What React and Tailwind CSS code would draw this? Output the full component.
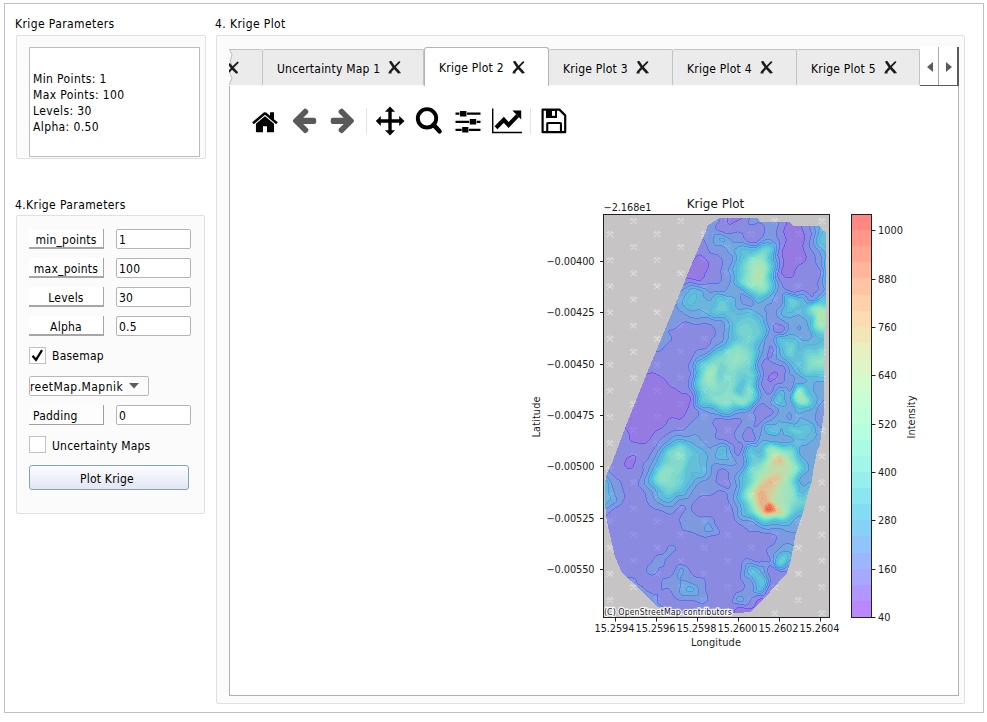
import React from "react";

// ---------------------------------------------------------------------------
// Kriged intensity surface, sampled every 10 px. Values are tenths of a band;
// each row is [first column, values...].
// ---------------------------------------------------------------------------
const SAMPLES = [
  [8, 28, 28, 28, 28, 28, 24, 17, 15, 26, 31, 34, 28, 18, 20, 30, 50, 60],
  [8, 28, 28, 28, 28, 31, 29, 18, 21, 31, 32, 34, 28, 16, 18, 30, 50, 60],
  [8, 28, 28, 28, 28, 33, 29, 28, 28, 27, 28, 36, 27, 15, 18, 32, 58, 62],
  [8, 28, 28, 28, 28, 38, 52, 42, 36, 28, 32, 42, 27, 15, 17, 32, 60, 64],
  [8, 25, 25, 25, 24, 31, 34, 44, 60, 62, 85, 72, 28, 13, 16, 30, 46, 62],
  [8, 24, 24, 22, 17, 24, 30, 38, 65, 92, 125, 70, 26, 14, 18, 25, 38, 60],
  [8, 25, 22, 16, 14, 24, 29, 42, 75, 118, 138, 72, 26, 15, 24, 22, 35, 85],
  [8, 26, 24, 22, 23, 27, 31, 44, 82, 118, 142, 76, 28, 25, 27, 22, 34, 66],
  [8, 32, 42, 52, 52, 38, 38, 44, 46, 75, 110, 62, 35, 31, 30, 28, 36, 56],
  [8, 34, 45, 64, 58, 52, 70, 58, 40, 34, 58, 44, 36, 78, 60, 36, 70, 62],
  [8, 33, 42, 50, 52, 60, 76, 68, 52, 54, 44, 36, 48, 68, 56, 85, 138, 85],
  [8, 32, 34, 33, 38, 36, 42, 62, 74, 75, 65, 36, 37, 48, 44, 66, 142, 105],
  [8, 30, 28, 22, 22, 28, 34, 52, 84, 82, 68, 34, 27, 46, 40, 50, 100, 85],
  [7, 31, 30, 28, 25, 22, 28, 40, 60, 80, 80, 62, 31, 62, 70, 50, 55, 60, 62],
  [6, 30, 30, 28, 26, 27, 34, 42, 66, 95, 105, 85, 46, 29, 58, 84, 60, 75, 80, 85],
  [6, 24, 23, 24, 26, 30, 50, 82, 92, 110, 108, 85, 38, 30, 40, 62, 70, 100, 112, 105],
  [6, 21, 22, 23, 25, 34, 80, 130, 82, 100, 90, 82, 36, 22, 24, 46, 60, 90, 82, 85],
  [5, 18, 18, 19, 22, 25, 35, 82, 122, 90, 100, 70, 80, 37, 19, 27, 36, 46, 54, 52, 50],
  [4, 17, 17, 17, 17, 18, 21, 31, 78, 100, 92, 100, 68, 95, 40, 28, 54, 42, 104, 60, 45, 42],
  [4, 16, 16, 16, 16, 17, 18, 22, 62, 88, 105, 102, 108, 85, 36, 38, 68, 48, 130, 72, 42, 45],
  [4, 16, 16, 16, 16, 16, 18, 22, 36, 48, 62, 64, 52, 38, 27, 29, 45, 41, 58, 50, 38, 42],
  [3, 22, 18, 16, 17, 18, 21, 22, 28, 34, 34, 28, 26, 31, 33, 28, 42, 50, 42, 52, 45, 36, 40],
  [3, 22, 19, 17, 18, 22, 28, 30, 36, 36, 33, 27, 26, 34, 29, 38, 65, 50, 75, 72, 65, 45, 45],
  [3, 23, 20, 19, 21, 30, 48, 52, 50, 40, 36, 32, 28, 31, 28, 50, 45, 50, 46, 58, 52, 46, 48],
  [2, 25, 23, 22, 23, 30, 46, 88, 98, 75, 54, 42, 62, 38, 29, 65, 60, 115, 112, 85, 46, 44, 48],
  [2, 26, 23, 18, 24, 34, 60, 92, 98, 65, 60, 48, 46, 50, 36, 72, 85, 145, 182, 130, 66, 46, 52],
  [1, 40, 31, 24, 21, 28, 50, 98, 102, 92, 64, 62, 42, 27, 34, 42, 82, 110, 150, 150, 128, 72, 48, 50],
  [1, 62, 38, 29, 24, 32, 56, 98, 100, 75, 58, 42, 37, 28, 31, 55, 95, 150, 190, 168, 112, 52, 46, 50],
  [1, 72, 48, 34, 27, 28, 44, 65, 86, 70, 46, 36, 33, 31, 34, 60, 120, 185, 172, 132, 112, 58, 70],
  [1, 60, 50, 32, 25, 24, 33, 48, 52, 40, 32, 28, 24, 23, 33, 60, 125, 198, 165, 138, 118, 86, 80],
  [1, 40, 33, 26, 23, 22, 28, 32, 33, 28, 32, 25, 22, 23, 29, 50, 88, 148, 235, 155, 95, 60, 60],
  [1, 28, 25, 24, 26, 24, 24, 25, 27, 31, 38, 33, 35, 24, 24, 36, 46, 70, 80, 75, 58, 46],
  [1, 24, 24, 25, 25, 25, 25, 25, 27, 29, 32, 35, 43, 28, 25, 25, 31, 34, 35, 40, 41, 42],
  [2, 25, 25, 25, 25, 25, 25, 25, 25, 25, 25, 25, 25, 25, 25, 26, 28, 28, 34, 38, 35],
  [2, 25, 25, 25, 25, 26, 28, 33, 26, 25, 25, 25, 25, 25, 25, 25, 25, 33, 45, 48],
  [2, 25, 25, 25, 25, 28, 35, 26, 22, 24, 25, 25, 25, 25, 27, 33, 29, 34, 80, 52],
  [2, 26, 25, 25, 25, 33, 29, 26, 42, 31, 26, 25, 25, 25, 32, 62, 55, 28, 31],
  [3, 35, 33, 26, 25, 29, 33, 40, 36, 32, 25, 24, 25, 28, 40, 70, 28, 22],
  [4, 34, 33, 29, 30, 31, 42, 54, 40, 27, 24, 25, 31, 38, 55, 22],
  [5, 33, 36, 29, 26, 29, 32, 32, 28, 24, 26, 44, 30, 20, 15],
  [6, 40, 36, 24, 24, 24, 24, 24, 24, 22, 17, 17, 17],
];

const HULL = [
  [720, 218], [758, 218], [760, 222], [790, 222], [793, 226], [820, 226], [822, 230],
  [826, 232], [826, 325], [824, 332], [824, 413], [822, 427], [820, 445], [817, 451],
  [813, 472], [812, 481], [808, 493], [803, 513], [795, 537], [791, 560], [787, 573],
  [770, 592], [751, 612], [737, 613], [672, 613], [658, 607], [640, 589], [622, 573],
  [615, 557], [607, 522], [605, 505], [605, 482], [607, 473], [612, 463], [627, 423],
  [647, 373], [662, 337], [673, 310], [688, 273], [705, 233], [708, 225],
];

function sample(col, row) {
  const r = SAMPLES[Math.max(0, Math.min(SAMPLES.length - 1, row))];
  const i = Math.max(1, Math.min(r.length - 1, col - r[0] + 1));
  return r[i] / 10;
}

function cubic(a, b, c, d, t) {
  return b + 0.5 * t * (c - a + t * (2 * a - 5 * b + 4 * c - d + t * (3 * (b - c) + d - a)));
}

function intensity(x, y) {
  const wx = x + 1.3 * Math.sin(y * 0.3 + x * 0.09);
  const wy = y + 1.3 * Math.sin(x * 0.28 - y * 0.1);
  const gx = (wx - 590) / 10;
  const gy = (wy - 210) / 10;
  const ix = Math.floor(gx);
  const iy = Math.floor(gy);
  const tx = gx - ix;
  const line = (j) =>
    cubic(sample(ix - 1, j), sample(ix, j), sample(ix + 1, j), sample(ix + 2, j), tx);
  return cubic(line(iy - 1), line(iy), line(iy + 1), line(iy + 2), gy - iy);
}

function inHull(x, y) {
  let inside = false;
  for (let i = 0, j = HULL.length - 1; i < HULL.length; j = i++) {
    const [xi, yi] = HULL[i];
    const [xj, yj] = HULL[j];
    if (yi > y !== yj > y && x < ((xj - xi) * (y - yi)) / (yj - yi) + xi) inside = !inside;
  }
  return inside;
}

const BANDS = 25;

function rainbow(band) {
  const x = (band + 0.5) / BANDS;
  const r = Math.abs(2 * x - 0.5);
  const g = Math.sin(Math.PI * x);
  const b = Math.cos((Math.PI * x) / 2);
  return `rgb(${[r, g, b].map((v) => Math.round(Math.min(1, v) * 255)).join(",")})`;
}

function buildSurface() {
  const x0 = 604, x1 = 828, y0 = 216, y1 = 616;
  const band = [];
  for (let y = y0; y <= y1; y++) {
    const row = [];
    for (let x = x0; x <= x1; x++) {
      row.push(
        inHull(x + 0.5, y + 0.5)
          ? Math.max(1, Math.min(BANDS - 1, Math.floor(intensity(x, y))))
          : -1
      );
    }
    band.push(row);
  }
  const fills = Array(BANDS).fill("");
  const lines = Array(BANDS).fill("");
  for (let j = 0; j < band.length; j++) {
    let start = 0;
    let key = null;
    for (let i = 0; i <= band[j].length; i++) {
      let next = null;
      const b = band[j][i];
      if (b >= 0) {
        const around = [band[j][i + 1], band[j][i - 1], band[j + 1]?.[i], band[j - 1]?.[i]];
        const edge = around.some((n) => n >= 0 && n < b);
        next = edge ? b + 100 : b;
      }
      if (next !== key) {
        if (key !== null) {
          const w = i - start;
          const d = `M${x0 + start} ${y0 + j}h${w}v1h-${w}z`;
          if (key >= 100) lines[key - 100] += d;
          else fills[key] += d;
        }
        start = i;
        key = next;
      }
    }
  }
  return { fills, lines };
}

const SURFACE = buildSurface();

const QUARRIES = [];
for (let c = 0; c < 10; c++) {
  for (let r = 0; r < 17; r++) {
    const y = (c % 2 ? 221 : 234) + r * 26.15 - (c % 2 ? 0 : 26.15);
    if (y > 219 && y < 614) QUARRIES.push([610 + c * 23.55, y]);
  }
}

const Y_TICKS = [
  [261.5, "−0.00400"], [312.8, "−0.00425"], [364.3, "−0.00450"], [415.5, "−0.00475"],
  [466.5, "−0.00500"], [518.3, "−0.00525"], [569.5, "−0.00550"],
];
const X_TICKS = [
  [615.5, "15.2594"], [656.5, "15.2596"], [697.5, "15.2598"],
  [738.5, "15.2600"], [779.5, "15.2602"], [820.5, "15.2604"],
];
const BAR_TICKS = [
  [230.5, "1000"], [279.3, "880"], [327.3, "760"], [375.5, "640"], [424.3, "520"],
  [472.3, "400"], [520.5, "280"], [569.3, "160"], [617.3, "40"],
];

function KrigePlot() {
  return (
    <svg
      viewBox="520 190 420 465"
      className="block h-[465px] w-[420px] font-['DejaVu_Sans',sans-serif] text-[9.8px] tracking-normal"
      fill="#1a1a1a"
    >
      <rect x="603" y="214" width="227" height="403" fill="#c6c4c4" />
      <g stroke="#dcdcdc" strokeWidth="1.2" fill="none">
        {QUARRIES.map(([x, y], i) => (
          <path
            key={i}
            d={`M${x - 3} ${y + 3}l5.2 -5.2M${x + 3} ${y + 3}l-5.2 -5.2M${x - 3.6} ${y - 0.6}l2.6 -2.4M${x + 3.6} ${y - 0.6}l-2.6 -2.4`}
          />
        ))}
      </g>
      <g shapeRendering="crispEdges">
        {SURFACE.fills.map((d, i) => (
          <path key={i} d={d} fill={rainbow(i)} fillOpacity="0.5" />
        ))}
        {SURFACE.lines.map((d, i) => (
          <path
            key={i}
            d={d}
            fill={rainbow(i > 5 ? i : i - 0.5)}
            fillOpacity={i > 18 ? 0.75 : i > 8 ? 0.62 : i > 5 ? 0.72 : 0.82}
          />
        ))}
      </g>
      <text
        x="604" y="615.3" textLength="128" className="text-[8px]"
        stroke="#fff" strokeOpacity="0.85" strokeWidth="2.4" paintOrder="stroke"
      >
        (C) OpenStreetMap contributors
      </text>
      <rect x="603.5" y="214.5" width="226" height="403" fill="none" stroke="#222" />

      <g shapeRendering="crispEdges">
        {Array.from({ length: BANDS }, (_, i) => {
          const top = Math.round(617 - (i + 1) * 16.12);
          const bottom = Math.round(617 - i * 16.12);
          return (
            <rect
              key={i} x="851" y={top} width="21" height={bottom - top}
              fill={rainbow(i)} fillOpacity="0.5"
            />
          );
        })}
      </g>
      <rect x="851.5" y="214.5" width="20" height="403" fill="none" stroke="#222" />

      <g stroke="#222">
        {Y_TICKS.map(([y]) => <path key={y} d={`M600 ${Math.floor(y)}.5h3`} />)}
        {X_TICKS.map(([x]) => <path key={x} d={`M${x} 618v3.5`} />)}
        {BAR_TICKS.map(([y]) => <path key={y} d={`M872 ${Math.floor(y)}.5h3.5`} />)}
      </g>
      {Y_TICKS.map(([y, t]) => (
        <text key={t} x="594.5" y={y + 3.5} textAnchor="end" textLength="48">{t}</text>
      ))}
      {X_TICKS.map(([x, t]) => (
        <text key={t} x={x - 1} y="632" textAnchor="middle" textLength="40">{t}</text>
      ))}
      {BAR_TICKS.map(([y, t]) => (
        <text key={t} x="878" y={y + 3.5}>{t}</text>
      ))}
      <text x="603.5" y="211" textLength="48">−2.168e1</text>
      <text x="715.5" y="208" textAnchor="middle" textLength="57.5" className="text-[12px]">Krige Plot</text>
      <text x="716" y="646" textAnchor="middle" textLength="50">Longitude</text>
      <text transform="translate(540 417) rotate(-90)" textAnchor="middle" textLength="41">Latitude</text>
      <text transform="translate(914.5 417) rotate(-90)" textAnchor="middle" textLength="43">Intensity</text>
    </svg>
  );
}

function CloseMark() {
  return (
    <svg viewBox="0 0 13 13" className="h-[13px] w-[13px] shrink-0" fill="none" stroke="#1c1c1c" strokeLinecap="round">
      <path d="M2.6 1.2Q5 5.6 10.6 11" strokeWidth="2.6" />
      <path d="M11.3 1.2L6.2 6.3" strokeWidth="1.9" />
      <path d="M6.2 6.3L2 11" strokeWidth="2.4" />
      <path d="M.9 11.9h2.4M10 11.7h2.3" strokeWidth="1" />
    </svg>
  );
}

function Tab({ label, selected, className }) {
  return (
    <div
      className={
        selected
          ? "flex h-[39px] shrink-0 items-center gap-[8px] self-end rounded-t-[3px] border border-b-0 border-[#b4b4b4] bg-white pl-[14px] " + className
          : "flex h-[36px] shrink-0 items-center gap-[8px] rounded-t-[2px] border-t border-r border-[#c2c2c2] bg-[#ebebeb] pl-[14px] " + className
      }
    >
      <span className={selected ? "whitespace-nowrap pt-px" : "whitespace-nowrap pt-[2px]"}>{label}</span>
      <CloseMark />
    </div>
  );
}

function ToolIcon({ children, className }) {
  return (
    <svg viewBox="0 0 30 30" className={"h-[30px] w-[30px] shrink-0 " + className} fill="#000">
      {children}
    </svg>
  );
}

const HOME =
  "M1408 992v480q0 26-19 45t-45 19h-384v-384h-256v384h-384q-26 0-45-19t-19-45v-480q0-1 .5-3t.5-3l575-474 575 474q1 2 1 6zm223-69l-62 74q-8 9-21 11h-3q-13 0-21-7l-692-577-692 577q-12 8-24 7-13-2-21-11l-62-74q-8-10-7-23.5t11-21.5l719-599q32-26 76-26t76 26l244 204v-195q0-14 9-23t23-9h192q14 0 23 9t9 23v408l219 182q10 8 11 21.5t-7 23.5z";
const ARROW =
  "M1536 896v128q0 53-32.5 90.5t-84.5 37.5h-704l293 294q38 36 38 90t-38 90l-75 76q-37 37-90 37-52 0-91-37l-651-652q-37-37-37-90 0-52 37-91l651-650q38-38 91-38 52 0 90 38l75 74q38 38 38 91t-38 91l-293 293h704q52 0 84.5 37.5t32.5 90.5z";

function Toolbar() {
  return (
    <div className="flex h-[30px] items-center pl-[20px]">
      <ToolIcon className="">
        <path d={HOME} transform="translate(1.9 2.2) scale(0.0157)" />
      </ToolIcon>
      <ToolIcon className="ml-[9px]">
        <path d={ARROW} fill="#595959" transform="translate(2.9 -0.3) scale(0.0158)" />
      </ToolIcon>
      <ToolIcon className="ml-[9px]">
        <path d={ARROW} fill="#595959" transform="translate(27 -0.3) scale(-0.0158 0.0158)" />
      </ToolIcon>
      <div className="ml-[8px] h-[26px] w-px bg-[#e3e3e3]" />
      <ToolIcon className="ml-[8px]">
        <path d="M15 .5l5 5.3h-3.3v7.5h7.5V10l5.3 5-5.3 5v-3.3h-7.5v7.5H20l-5 5.3-5-5.3h3.3v-7.5H5.8V20L.8 15l5-5v3.3h7.5V5.8H10z" />
      </ToolIcon>
      <ToolIcon className="ml-[9px]">
        <circle cx="13" cy="12.3" r="9.2" fill="none" stroke="#000" strokeWidth="3.9" />
        <path d="M19.5 18.8l6 6.4" stroke="#000" strokeWidth="4.6" strokeLinecap="round" />
      </ToolIcon>
      <ToolIcon className="ml-[9px]">
        <path d="M2.5 6.5h25v2.2h-25zM2.5 14.8h25v2.2h-25zM2.5 22.8h25V25h-25z" />
        <path
          d="M7 5h6.4v5.6H7zM16.8 13h6.4v5.6h-6.4zM9.2 21h6.2v5.6H9.2z"
          stroke="#fff" strokeWidth="1" paintOrder="stroke"
        />
      </ToolIcon>
      <ToolIcon className="ml-[9px]">
        <path d="M0 2.5h1.4v23.2H30v1.5H0z" />
        <path d="M4 21.8l7.8-8 4.8 5.2 9-9.4" fill="none" stroke="#000" strokeWidth="4.1" />
        <path d="M20.4 4.6h8.8v8.8z" />
      </ToolIcon>
      <div className="ml-[8px] h-[26px] w-px bg-[#e3e3e3]" />
      <ToolIcon className="ml-[8px]">
        <path
          d="M3.6 3.6h16.8l5.8 5.8v16.8H3.6z"
          fill="none" stroke="#000" strokeWidth="2.2" strokeLinejoin="round"
        />
        <path d="M7 4h11v8H7zM7.2 17.6q0-1.6 1.6-1.6h12.6q1.6 0 1.6 1.6V26h-2.1v-8h-11.6v8H7.2z" />
        <path d="M13 5h3v4.8h-3z" fill="#fff" />
      </ToolIcon>
    </div>
  );
}

function ParamRow({ label, value, left }) {
  return (
    <div className="flex h-[20px] gap-[12px]">
      <div
        className={
          left
            ? "flex w-[75px] items-center border-r border-b border-[#a0a0a0] bg-[#fdfdfd] pt-[2px] pl-[4px]"
            : "flex w-[75px] items-center justify-center border-r border-b-2 border-[#a6a6a6] bg-white pt-[3px]"
        }
      >
        {label}
      </div>
      <div className="flex w-[75px] items-center rounded-[2px] border border-[#b4b4b4] bg-white pt-[2px] pl-[2px]">
        {value}
      </div>
    </div>
  );
}

export default function App() {
  return (
    <div className="h-[722px] w-[987px] overflow-hidden bg-white pt-[3px] pl-[4px] font-['DejaVu_Sans_Condensed','DejaVu_Sans',sans-serif] text-[12px] leading-[16px] tracking-[0.22px] text-black">
      <div className="flex h-[710px] w-[980px] border border-[#bfbfbf]">
        <div className="flex w-[211px] flex-col pt-[12px] pl-[10px]">
          <div className="h-[19px] tracking-[0.4px]">Krige Parameters</div>
          <div className="ml-px h-[124px] w-[190px] rounded-[2px] border border-[#e0e0e0] bg-[#fbfbfb] pt-[11px] pl-[12px]">
            <div className="h-[110px] w-[171px] border border-[#bdbdbd] bg-white pt-[23px] pl-[3px] tracking-[0.38px]">
              <div>Min Points: 1</div>
              <div>Max Points: 100</div>
              <div>Levels: 30</div>
              <div>Alpha: 0.50</div>
            </div>
          </div>
          <div className="mt-[38px] h-[18px] tracking-[0.4px]">4.Krige Parameters</div>
          <div className="ml-px flex h-[299px] w-[189px] flex-col rounded-[2px] border border-[#e0e0e0] bg-[#fbfbfb] pt-[13px] pl-[12px]">
            <div className="flex flex-col gap-[9px]">
              <ParamRow label="min_points" value="1" />
              <ParamRow label="max_points" value="100" />
              <ParamRow label="Levels" value="30" />
              <ParamRow label="Alpha" value="0.5" />
            </div>
            <div className="mt-[11px] flex h-[17px] items-center gap-[6px]">
              <div className="flex h-[17px] w-[17px] items-center justify-center border border-[#c2c2c2] bg-white">
                <svg viewBox="0 0 13 13" className="h-[13px] w-[13px]" fill="none" stroke="#000" strokeWidth="2.2">
                  <path d="M1.5 6.8L5 10.8 11 1.2" />
                </svg>
              </div>
              <span className="pt-px">Basemap</span>
            </div>
            <div className="mt-[12px] flex h-[20px] w-[120px] items-center rounded-[2px] border border-[#b8b8b8] bg-[#fbfbfb]">
              <div className="h-[18px] w-[94px] overflow-hidden bg-white pt-[2px] tracking-[0.45px] whitespace-nowrap">reetMap.Mapnik</div>
              <svg viewBox="0 0 10 6" className="ml-[5px] h-[6px] w-[10px]">
                <path d="M0 0h10L5 5.6z" fill="#5c5c5c" />
              </svg>
            </div>
            <div className="mt-[9px]">
              <ParamRow label="Padding" value="0" left />
            </div>
            <div className="mt-[11px] flex h-[17px] items-center gap-[6px]">
              <div className="h-[17px] w-[17px] border border-[#c2c2c2] bg-white" />
              <span className="pt-[2px]">Uncertainty Maps</span>
            </div>
            <div className="mt-[12px] flex h-[25px] w-[160px] items-center justify-center rounded-[3px] border border-[#84a3b3] bg-linear-to-b from-[#fdfdff] to-[#e2e6f4] pr-[4px] pt-[2px]">
              Plot Krige
            </div>
          </div>
        </div>

        <div className="flex flex-col pt-[12px]">
          <div className="-ml-px h-[19px] tracking-[0.4px]">4. Krige Plot</div>
          <div className="h-[669px] w-[749px] rounded-[2px] border border-[#e0e0e0] bg-[#fbfbfb] pt-[11px] pl-[12px]">
            <div className="flex h-[39px] w-[730px] items-end">
              <div className="flex h-[39px] w-[691px] items-start overflow-hidden pt-[2px]">
                <svg viewBox="0 0 34 36" className="h-[36px] w-[34px] shrink-0">
                  <path d="M0 0h34v36H0L3 26 0 16 3 6z" fill="#ebebeb" />
                  <path d="M0 .5h31q2.500 2.500v33M0 0l3 6-1.500 6 1 6-1 6 1.500 4-3 8" fill="none" stroke="none" />
                  <path d="M0 .5H32.500Q33.500 .5 33.500 2V36" fill="none" stroke="#c2c2c2" />
                  <path d="M.3 0L3 5.500 1.300 12 3.300 17.500 1 24 3 29.500 0 36" fill="none" stroke="#bcbcbc" />
                  <g fill="none" stroke="#1c1c1c" strokeLinecap="round">
                    <path d="M.5 15.500Q3 19 7.600 23.400" strokeWidth="2.500" />
                    <path d="M8.600 13.600L3.600 18.600 0 22.600" strokeWidth="2" />
                  </g>
                </svg>
                <Tab label="Uncertainty Map 1" className="w-[161px]" />
                <Tab label="Krige Plot 2" selected className="w-[125px]" />
                <Tab label="Krige Plot 3" className="w-[124px]" />
                <Tab label="Krige Plot 4" className="w-[124px]" />
                <Tab label="Krige Plot 5" className="w-[123px]" />
              </div>
              <div className="flex h-[39px] w-[39px] border-r-2 border-b border-[#5a5a5a] bg-white">
                <div className="flex w-[19px] items-center justify-center border-r border-[#a8a8a8] pt-[2px] pl-[2px]">
                  <svg viewBox="0 0 6 10" className="h-[10px] w-[6px]"><path d="M6 0v10L0 5z" fill="#5c5c5c" /></svg>
                </div>
                <div className="flex flex-1 items-center justify-center pt-[2px] pl-[2px]">
                  <svg viewBox="0 0 6 10" className="h-[10px] w-[6px]"><path d="M0 0v10l6-5z" fill="#5c5c5c" /></svg>
                </div>
              </div>
            </div>
            <div className="h-[610px] w-[730px] border border-t-0 border-[#b0b0b0] bg-white pt-[20px]">
              <Toolbar />
              <div className="mt-[54px] ml-[290px]">
                <KrigePlot />
              </div>
            </div>
          </div>
        </div>
      </div>
    </div>
  );
}
